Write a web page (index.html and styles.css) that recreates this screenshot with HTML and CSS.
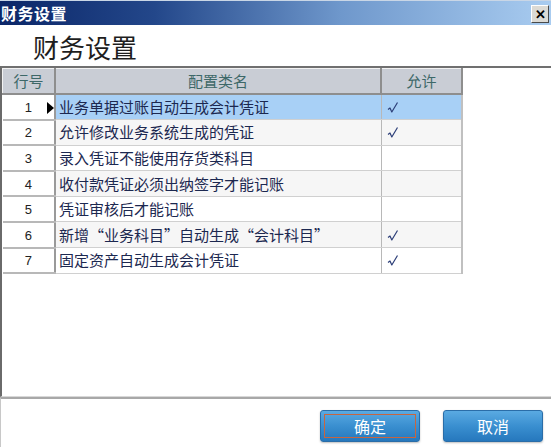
FILE: index.html
```html
<!DOCTYPE html>
<html lang="zh">
<head>
<meta charset="utf-8">
<title>财务设置</title>
<link rel="stylesheet" href="styles.css">
</head>
<body>
<div class="window">
  <div class="titlebar">
    <span class="title">财务设置</span>
    <span class="close">✕</span>
  </div>
  <div class="heading">财务设置</div>
  <div class="gridpane">
    <table class="grid">
      <thead>
        <tr>
          <th class="c1">行号</th>
          <th class="c2">配置类名</th>
          <th class="c3">允许</th>
        </tr>
      </thead>
      <tbody>
        <tr class="sel">
          <td class="rh"><span class="num">1</span><span class="arrow"></span></td>
          <td class="name">业务单据过账自动生成会计凭证</td>
          <td class="ok"><svg class="chk" viewBox="0 0 12 12"><path d="M1 8 L3 6.5 L4.8 10.5 L10.5 1"/></svg></td>
        </tr>
        <tr class="alt">
          <td class="rh"><span class="num">2</span></td>
          <td class="name">允许修改业务系统生成的凭证</td>
          <td class="ok"><svg class="chk" viewBox="0 0 12 12"><path d="M1 8 L3 6.5 L4.8 10.5 L10.5 1"/></svg></td>
        </tr>
        <tr>
          <td class="rh"><span class="num">3</span></td>
          <td class="name">录入凭证不能使用存货类科目</td>
          <td class="ok"></td>
        </tr>
        <tr class="alt">
          <td class="rh"><span class="num">4</span></td>
          <td class="name">收付款凭证必须出纳签字才能记账</td>
          <td class="ok"></td>
        </tr>
        <tr>
          <td class="rh"><span class="num">5</span></td>
          <td class="name">凭证审核后才能记账</td>
          <td class="ok"></td>
        </tr>
        <tr class="alt">
          <td class="rh"><span class="num">6</span></td>
          <td class="name">新增“业务科目”自动生成“会计科目”</td>
          <td class="ok"><svg class="chk" viewBox="0 0 12 12"><path d="M1 8 L3 6.5 L4.8 10.5 L10.5 1"/></svg></td>
        </tr>
        <tr>
          <td class="rh"><span class="num">7</span></td>
          <td class="name">固定资产自动生成会计凭证</td>
          <td class="ok"><svg class="chk" viewBox="0 0 12 12"><path d="M1 8 L3 6.5 L4.8 10.5 L10.5 1"/></svg></td>
        </tr>
      </tbody>
    </table>
  </div>
  <div class="footer">
    <button class="btn focus"><span class="lbl">确定</span></button>
    <button class="btn"><span class="lbl">取消</span></button>
  </div>
</div>
</body>
</html>
```

FILE: styles.css
```css
html, body {
  margin: 0;
  padding: 0;
  background: #ffffff;
}
body {
  width: 551px;
  height: 447px;
  overflow: hidden;
  font-family: "Noto Sans CJK SC", "Noto Sans", sans-serif;
}
.window {
  display: flex;
  flex-direction: column;
  height: 447px;
}
.titlebar {
  height: 25px;
  flex: 0 0 25px;
  box-sizing: border-box;
  border-top: 1px solid #c9d6e6;
  background: linear-gradient(to right, #0b2668 0%, #23478a 28%, #6f98cc 62%, #a9ccf0 100%);
  display: flex;
  align-items: center;
  justify-content: space-between;
  padding: 0 2px 0 1px;
}
.title {
  color: #ffffff;
  font-weight: bold;
  font-size: 16px;
  line-height: 18px;
  letter-spacing: 0.5px;
}
.close {
  width: 18px;
  height: 18px;
  box-sizing: border-box;
  background: #dcdad4;
  border: 1px solid;
  border-color: #ffffff #4a4a4a #4a4a4a #ffffff;
  font-size: 13px;
  font-weight: bold;
  color: #000;
  display: flex;
  align-items: center;
  justify-content: center;
  line-height: 1;
  margin-top: 1px;
}
.heading {
  flex: 0 0 41px;
  height: 41px;
  box-sizing: border-box;
  padding: 8px 0 0 33px;
  font-size: 26px;
  line-height: 28px;
  color: #1e1e1e;
}
.gridpane {
  flex: 0 0 331px;
  height: 331px;
  box-sizing: border-box;
  border-top: 2px solid #707070;
  border-left: 2px solid #6a6a6a;
  border-bottom: 1px solid #d8d8d8;
  background: #ffffff;
}
.grid {
  border-collapse: collapse;
  table-layout: fixed;
  width: 460px;
  font-size: 15px;
}
.grid th {
  height: 24px;
  padding: 0;
  background: #c9cdd5;
  color: #3d6868;
  font-weight: normal;
  line-height: 20px;
  text-align: center;
  border-top: 1px solid #f2f2f2;
  border-left: 1px solid #f2f2f2;
  border-right: 2px solid #8e8e8e;
  border-bottom: 2px solid #8e8e8e;
}
.grid th.c1 { width: 51px; }
.grid th.c2 { width: 324px; }
.grid th.c3 { width: 79px; }
.grid td {
  height: 25.6px;
  padding: 0;
  line-height: 20px;
  border-bottom: 1px solid #d0d0d0;
  box-sizing: border-box;
}
.grid td.rh {
  background: #ffffff;
  border-bottom: 2px solid #b8b8b8;
  border-right: 2px solid #9a9a9a;
  position: relative;
  text-align: center;
}
.num {
  display: inline-block;
  width: 50px;
  text-align: center;
  color: #222;
  font-size: 13px;
  font-family: "Liberation Sans", "DejaVu Sans", sans-serif;
}
.arrow {
  position: absolute;
  right: 0;
  top: 7px;
  width: 0;
  height: 0;
  border-top: 6px solid transparent;
  border-bottom: 6px solid transparent;
  border-left: 7px solid #000;
}
.grid td.name {
  padding-left: 3px;
  color: #1c2850;
  white-space: nowrap;
  border-right: 1px solid #b8b8b8;
}
.grid td.ok {
  padding-left: 5px;
  border-right: 2px solid #c0c0c0;
}
.grid tr.alt td.name,
.grid tr.alt td.ok {
  background: #f6f6f6;
}
.grid tr.sel td.name,
.grid tr.sel td.ok {
  background: #a8d0f6;
}
.chk {
  width: 12px;
  height: 13px;
  display: block;
  margin-top: 1px;
}
.chk path {
  fill: none;
  stroke: #2c3e78;
  stroke-width: 1.2;
  stroke-linejoin: round;
}
.footer {
  flex: 1 1 auto;
  box-sizing: border-box;
  border-top: 2px solid #a8a8a8;
  border-left: 1px solid #c8c8c8;
  display: flex;
  justify-content: flex-end;
  align-items: flex-start;
  gap: 23px;
  padding: 11px 8px 0 0;
}
.btn {
  width: 100px;
  height: 32px;
  box-sizing: border-box;
  border: 1px solid #2a6da8;
  border-radius: 3px;
  background: linear-gradient(to bottom, #5aaae2 0%, #3a8fd0 50%, #2678bd 100%);
  color: #ffffff;
  font-family: "Noto Sans CJK SC", sans-serif;
  font-size: 16px;
  padding: 3px;
  display: flex;
  align-items: stretch;
  justify-content: stretch;
  box-shadow: 0 1px 2px rgba(0,0,0,0.25);
}
.btn .lbl {
  flex: 1;
  display: flex;
  align-items: center;
  justify-content: center;
  border: 1px solid transparent;
}
.btn.focus .lbl {
  border-color: #c8653f;
}
```
